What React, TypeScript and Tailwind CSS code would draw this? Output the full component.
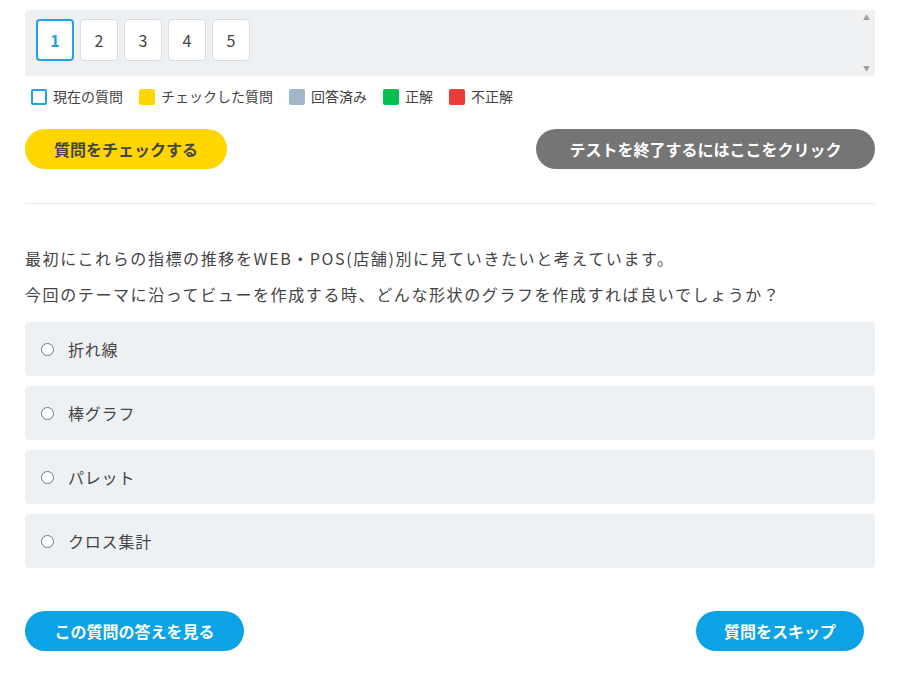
export default function App() {
  const font = { fontFamily: '"Noto Sans CJK JP", "Noto Sans", sans-serif' };
  const legend = [
    { c: "border-2 border-[#1ea1e8] bg-white", t: "現在の質問" },
    { c: "bg-[#ffd600]", t: "チェックした質問" },
    { c: "bg-[#a3b5c8]", t: "回答済み" },
    { c: "bg-[#00c050]", t: "正解" },
    { c: "bg-[#ec3a3a]", t: "不正解" },
  ];
  const opts = ["折れ線", "棒グラフ", "パレット", "クロス集計"];
  return (
    <div className="w-[900px] h-[679px] bg-white px-[25px] pt-[10px] text-[#444]" style={font}>
      <div className="flex h-[66px] bg-[#eef1f4] rounded-t-[4px]">
        <div className="flex-1 flex items-start gap-[6px] pl-[11px] pt-[9px]">
          {[1, 2, 3, 4, 5].map((n) => (
            <div
              key={n}
              className={`w-[38px] h-[42px] rounded-[4px] bg-white flex items-center justify-center text-[16px] ${
                n === 1 ? "border-2 border-[#1ea1e8] text-[#1ea1e8] font-bold" : "border border-[#d8dbe0] text-[#444]"
              }`}
            >
              {n}
            </div>
          ))}
        </div>
        <div className="w-[17px] bg-[#f1f1f1] flex flex-col items-center justify-between py-[4px] text-[#a0a0a0] text-[7px] leading-none">
          <span>▲</span>
          <span>▼</span>
        </div>
      </div>
      <div className="flex items-center gap-[16px] mt-[10px] text-[14px] ml-[6px]">
        {legend.map((l) => (
          <div key={l.t} className="flex items-center gap-[6px]">
            <span className={`w-[16px] h-[16px] rounded-[2px] ${l.c}`} />
            <span>{l.t}</span>
          </div>
        ))}
      </div>
      <div className="flex justify-between mt-[22px]">
        <button className="h-[40px] w-[202px] rounded-full bg-[#ffd600] text-[#444] font-bold text-[16px]">質問をチェックする</button>
        <button className="h-[40px] w-[339px] rounded-full bg-[#757575] text-white font-bold text-[16px]">テストを終了するにはここをクリック</button>
      </div>
      <div className="h-px bg-[#e8e8e8] mt-[34px]" />
      <p className="mt-[44px] text-[16px] tracking-[0.1em] leading-[20px]">最初にこれらの指標の推移をWEB・POS(店舗)別に見ていきたいと考えています。</p>
      <p className="mt-[16px] text-[16px] tracking-[0.1em] leading-[20px]">今回のテーマに沿ってビューを作成する時、どんな形状のグラフを作成すれば良いでしょうか？</p>
      <div className="flex flex-col gap-[10px] mt-[18px]">
        {opts.map((o) => (
          <div key={o} className="h-[54px] bg-[#eef1f4] rounded-[4px] flex items-center pl-[16px] gap-[14px]">
            <span className="w-[13px] h-[13px] rounded-full border border-[#777] bg-white" />
            <span className="text-[16px] tracking-[0.05em]">{o}</span>
          </div>
        ))}
      </div>
      <div className="flex justify-between mt-[43px] pr-[11px]">
        <button className="h-[40px] w-[219px] rounded-full bg-[#0ba3e6] text-white font-bold text-[16px]">この質問の答えを見る</button>
        <button className="h-[40px] w-[168px] rounded-full bg-[#0ba3e6] text-white font-bold text-[16px]">質問をスキップ</button>
      </div>
    </div>
  );
}
